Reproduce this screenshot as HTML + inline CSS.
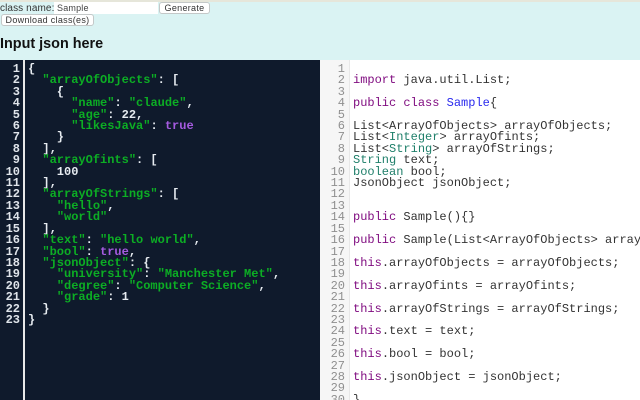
<!DOCTYPE html>
<html><head><meta charset="utf-8"><style>
html,body{margin:0;padding:0;width:640px;height:400px;overflow:hidden;background:#daf3f3;}
body{position:relative;font-family:"Liberation Sans",sans-serif;}
.a{position:absolute;white-space:pre;}
.btn{position:absolute;box-sizing:border-box;background:#fff;border:1px solid #c4c8c8;border-radius:3px;font-size:9px;color:#333;text-align:center;letter-spacing:.3px;}
#top{position:absolute;left:0;top:0;width:640px;height:2px;background:#e6e6da;}
#left{position:absolute;left:0;top:60px;width:320px;height:340px;background:#0f1a2c;overflow:hidden;}
#right{position:absolute;left:320px;top:60px;width:320px;height:340px;background:#fff;overflow:hidden;}
#lg{position:absolute;left:23px;top:0;width:2px;height:340px;background:#e8e8e8;}
#rg{position:absolute;left:0;top:0;width:29px;height:340px;background:#f6f6f6;border-right:1px solid #e8e8e8;}
pre{position:absolute;margin:0;font-family:"Liberation Mono",monospace;font-size:12px;line-height:11.41px;}
#ln{left:0;top:4px;width:20px;text-align:right;color:#dfe4ea;font-weight:bold;}
#lc{left:28px;top:4px;color:#e6ebf0;font-weight:bold;}
#lc s{text-decoration:none;color:#0cae24;}
#lc u{text-decoration:none;color:#a55be0;}
#rn{left:0;top:4px;width:25px;text-align:right;color:#8f8f8f;}
#rc{left:33px;top:4px;color:#333;}
#rc b{font-weight:normal;color:#7f0a7f;}
#rc i{font-style:normal;color:#1f7f6a;}
#rc em{font-style:normal;color:#2a2aee;}
</style></head><body>
<div id="top"></div>
<div class="a" style="left:0;top:3px;font-size:10px;line-height:12px;color:#333;letter-spacing:.1px;">class name:</div>
<div class="a" style="left:54px;top:2px;width:104px;height:12px;background:#fff;font-size:9px;line-height:13px;color:#444;padding-left:3px;box-sizing:border-box;letter-spacing:.2px;">Sample</div>
<div class="btn" style="left:159px;top:2px;width:51px;height:12px;line-height:10px;">Generate</div>
<div class="btn" style="left:1px;top:14px;width:93px;height:12px;line-height:10px;">Download class(es)</div>
<div class="a" style="left:0;top:36px;font-size:14.4px;line-height:16px;font-weight:bold;color:#111;">Input json here</div>
<div id="left"><div id="lg"></div>
<pre id="ln">1
2
3
4
5
6
7
8
9
10
11
12
13
14
15
16
17
18
19
20
21
22
23</pre>
<pre id="lc">{
  <s>"arrayOfObjects"</s>: [
    {
      <s>"name"</s>: <s>"claude"</s>,
      <s>"age"</s>: 22,
      <s>"likesJava"</s>: <u>true</u>
    }
  ],
  <s>"arrayOfints"</s>: [
    100
  ],
  <s>"arrayOfStrings"</s>: [
    <s>"hello"</s>,
    <s>"world"</s>
  ],
  <s>"text"</s>: <s>"hello world"</s>,
  <s>"bool"</s>: <u>true</u>,
  <s>"jsonObject"</s>: {
    <s>"university"</s>: <s>"Manchester Met"</s>,
    <s>"degree"</s>: <s>"Computer Science"</s>,
    <s>"grade"</s>: 1
  }
}</pre></div>
<div id="right"><div id="rg"></div>
<pre id="rn">1
2
3
4
5
6
7
8
9
10
11
12
13
14
15
16
17
18
19
20
21
22
23
24
25
26
27
28
29
30</pre>
<pre id="rc">

<b>import</b> java.util.List;

<b>public</b> <b>class</b> <em>Sample</em>{

List&lt;ArrayOfObjects&gt; arrayOfObjects;
List&lt;<i>Integer</i>&gt; arrayOfints;
List&lt;<i>String</i>&gt; arrayOfStrings;
<i>String</i> text;
<i>boolean</i> bool;
JsonObject jsonObject;


<b>public</b> Sample(){}

<b>public</b> Sample(List&lt;ArrayOfObjects&gt; arrayOfObjects,

<b>this</b>.arrayOfObjects = arrayOfObjects;

<b>this</b>.arrayOfints = arrayOfints;

<b>this</b>.arrayOfStrings = arrayOfStrings;

<b>this</b>.text = text;

<b>this</b>.bool = bool;

<b>this</b>.jsonObject = jsonObject;

}</pre></div>
</body></html>
